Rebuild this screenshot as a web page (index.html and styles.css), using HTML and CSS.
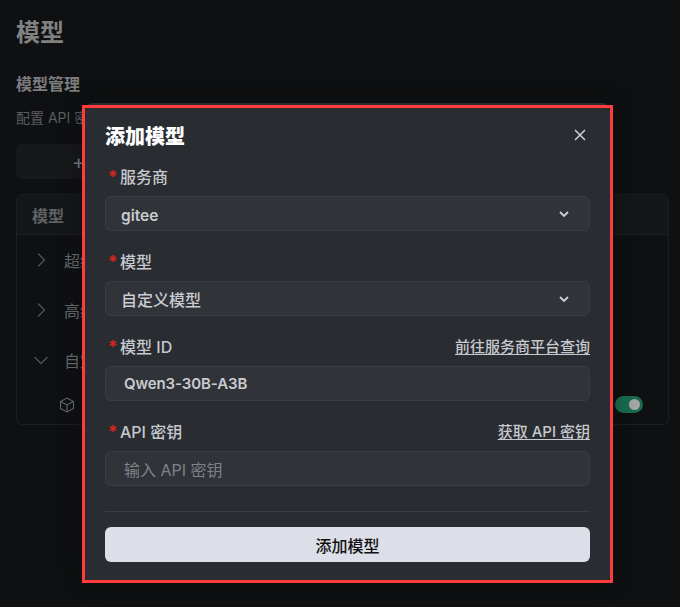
FILE: index.html
```html
<!DOCTYPE html>
<html lang="zh">
<head>
<meta charset="utf-8">
<title>模型</title>
<link rel="stylesheet" href="styles.css">
</head>
<body>
<main class="page">
  <h1 class="page-title">模型</h1>
  <h2 class="section-title">模型管理</h2>
  <p class="section-desc">配置 API 密钥和模型</p>
  <button class="add-btn" type="button"><span class="plus">+</span> 添加模型</button>
  <section class="table">
    <div class="table-head"><span>模型</span></div>
    <div class="group">
      <svg class="chev" viewBox="0 0 16 16"><path d="M5 1.500 11.500 8 5 14.500"/></svg>
      <span>超级模型</span>
    </div>
    <div class="group">
      <svg class="chev" viewBox="0 0 16 16"><path d="M5 1.500 11.500 8 5 14.500"/></svg>
      <span>高级模型</span>
    </div>
    <div class="group">
      <svg class="chev" viewBox="0 0 16 16"><path d="M1.500 5 8 11.500 14.500 5"/></svg>
      <span>自定义模型</span>
    </div>
    <div class="child">
      <svg class="cube" viewBox="0 0 16 16"><path d="M8 1 14.500 4.500V11.500L8 15 1.500 11.500V4.500Z"/><path d="M1.500 4.500 8 8 14.500 4.500M8 8V15"/></svg>
      <span class="child-name">Qwen3-30B-A3B</span>
      <span class="toggle"><span class="knob"></span></span>
    </div>
  </section>
</main>

<div class="modal">
  <div class="modal-head">
    <h3 class="modal-title">添加模型</h3>
    <svg class="close" viewBox="0 0 12 12"><path d="M1 1 11 11M11 1 1 11"/></svg>
  </div>
  <form class="form">
    <div class="field">
      <div class="label-row"><label class="label"><span class="star">*</span>服务商</label></div>
      <div class="control select"><span class="value latin">gitee</span><svg class="caret" viewBox="0 0 12 8"><path d="M2 2 6 6 10 2"/></svg></div>
    </div>
    <div class="field">
      <div class="label-row"><label class="label"><span class="star">*</span>模型</label></div>
      <div class="control select"><span class="value">自定义模型</span><svg class="caret" viewBox="0 0 12 8"><path d="M2 2 6 6 10 2"/></svg></div>
    </div>
    <div class="field">
      <div class="label-row"><label class="label"><span class="star">*</span>模型 ID</label><a class="link">前往服务商平台查询</a></div>
      <div class="control input"><span class="value strong">Qwen3-30B-A3B</span></div>
    </div>
    <div class="field">
      <div class="label-row"><label class="label"><span class="star">*</span>API 密钥</label><a class="link">获取 API 密钥</a></div>
      <div class="control input"><span class="placeholder">输入 API 密钥</span></div>
    </div>
    <div class="footer">
      <button class="submit" type="button">添加模型</button>
    </div>
  </form>
</div>
<div class="highlight"></div>
</body>
</html>
```
FILE: styles.css
```css
* { box-sizing: border-box; }
html, body { margin: 0; height: 100%; }
body {
  background: #0f1011;
  font-family: Inter, "Noto Sans CJK SC", "Noto Sans", sans-serif;
  overflow: hidden;
}
.page { padding: 15px 11px 0 16px; }
.page-title {
  margin: 0;
  font-size: 24px;
  line-height: 36px;
  font-weight: 700;
  color: #818182;
}
.section-title {
  margin: 21px 0 0;
  font-size: 16px;
  line-height: 24px;
  font-weight: 600;
  color: #7b7c7e;
}
.section-desc {
  margin: 12px 0 0;
  font-size: 14px;
  line-height: 20px;
  color: #5a5c60;
}
.add-btn {
  display: block;
  width: 200px;
  height: 35px;
  margin-top: 16px;
  padding: 0 0 0 56px;
  border: 0;
  border-radius: 6px;
  background: #17181a;
  color: #6f7885;
  font: inherit;
  font-size: 14px;
  text-align: left;
}
.plus { font-size: 20px; }
.table {
  margin-top: 15px;
  border: 1px solid #1d1e20;
  border-radius: 6px;
  overflow: hidden;
}
.table-head {
  display: flex;
  align-items: center;
  height: 40px;
  padding-left: 15px;
  background: #151618;
  border-bottom: 1px solid #1d1e20;
  font-size: 16px;
  font-weight: 600;
  color: #5f6164;
}
.group {
  display: flex;
  align-items: center;
  height: 50px;
  padding: 0 0 0 16px;
  gap: 15px;
  font-size: 16px;
  color: #63676e;
}
.chev { width: 16px; height: 16px; flex: none; fill: none; stroke: #4d5460; stroke-width: 1.300; }
.child {
  display: flex;
  align-items: center;
  height: 39px;
  padding: 0 25px 0 42px;
  font-size: 14px;
  color: #60646b;
}
.cube { width: 16px; height: 16px; flex: none; fill: none; stroke: #65686d; stroke-width: 1.100; }
.child-name { margin-left: 12px; }
.toggle {
  display: flex;
  align-items: center;
  justify-content: flex-end;
  width: 28px;
  height: 17px;
  margin-left: auto;
  padding-right: 3px;
  border-radius: 9px;
  background: #196a4f;
}
.knob { width: 11px; height: 11px; border-radius: 50%; background: #a3a5a6; }

.modal {
  position: absolute;
  left: 85px;
  top: 103px;
  width: 525px;
  height: 477px;
  padding: 20px 20px 0;
  background: #292c31;
  border-radius: 8px 8px 2px 2px;
  box-shadow: 0 0 24px rgba(0, 0, 0, .35);
}
.modal-head {
  display: flex;
  align-items: center;
  justify-content: space-between;
  height: 28px;
}
.modal-title {
  margin: 0;
  font-size: 20px;
  line-height: 28px;
  font-weight: 900;
  color: #fff;
}
.close { width: 12px; height: 12px; margin: 0 4px 4px 0; fill: none; stroke: #cfd1d5; stroke-width: 1.500; }
.form { margin-top: 15px; }
.field { margin-bottom: 20px; }
.label-row {
  display: flex;
  align-items: center;
  justify-content: space-between;
  height: 22px;
  margin-bottom: 8px;
}
.label { display: flex; align-items: center; font-size: 16px; line-height: 22px; color: #c6c8cd; font-weight: 500; }
.star { width: 15px; padding-left: 3px; font-size: 17px; font-weight: 700; line-height: 22px; color: #d4251f; }
.link {
  font-size: 15px;
  line-height: 20px;
  font-weight: 500;
  color: #c6c8cd;
  text-decoration: underline;
  text-underline-offset: 2px;
}
.control {
  display: flex;
  align-items: center;
  height: 35px;
  border: 1px solid #3b3d42;
  border-radius: 6px;
  background: #303338;
}
.select { justify-content: space-between; padding: 0 19px 0 15px; }
.input { padding: 0 18px; }
.value { font-size: 16px; font-weight: 500; color: #c9cbd0; }
.value.latin { padding-top: 4px; font-weight: 600; font-size: 15.500px; }
.value.strong { font-size: 15px; font-weight: 600; letter-spacing: -.1px; }
.placeholder { font-size: 16px; color: #7f8289; }
.caret { width: 12px; height: 8px; fill: none; stroke: #cfd1d5; stroke-width: 1.800; }
.footer {
  margin-top: 25px;
  padding-top: 15px;
  border-top: 1px solid #3a3c41;
}
.submit {
  display: block;
  width: 100%;
  height: 35px;
  border: 0;
  border-radius: 6px;
  background: #dcdfe7;
  color: #111;
  font: inherit;
  font-size: 16px;
  font-weight: 500;
}
.highlight {
  position: absolute;
  left: 82px;
  top: 105px;
  width: 531px;
  height: 478px;
  border: 3px solid #ff3b3b;
  pointer-events: none;
}
```
